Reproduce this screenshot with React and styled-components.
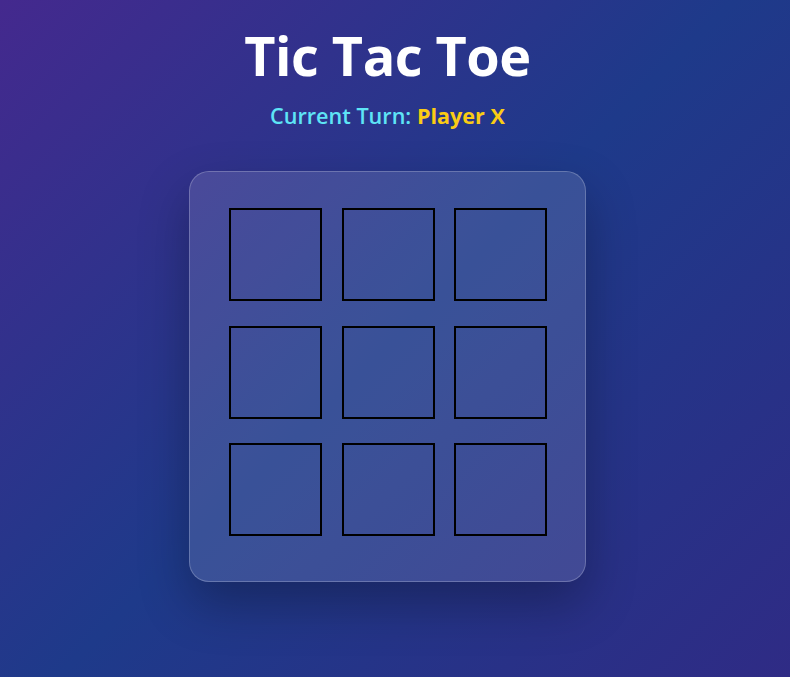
import React, { useState } from "react";
import styled, { createGlobalStyle } from "styled-components";

const Global = createGlobalStyle`
  html, body { margin: 0; padding: 0; }
  body {
    font-family: "Open Sans", "Noto Sans", sans-serif;
    background: linear-gradient(135deg, #44298e 0%, #1e3a8a 50%, #2f2b85 100%);
    min-height: 100vh;
  }
`;

const Page = styled.main`
  min-height: 100vh;
  display: flex;
  flex-direction: column;
  align-items: center;
  padding: 18px 15px 0 0;
  box-sizing: border-box;
`;

const Title = styled.h1`
  margin: 0;
  font-size: 54px;
  line-height: 74px;
  font-weight: 700;
  color: #ffffff;
  letter-spacing: -0.5px;
`;

const Status = styled.p`
  margin: 10px 0 0;
  font-size: 21.6px;
  line-height: 28px;
  color: #5ee4f6;
  font-weight: 600;
`;

const Player = styled.span`
  color: #facc15;
  font-weight: 700;
`;

const Board = styled.div`
  margin-top: 41px;
  display: grid;
  grid-template-columns: repeat(3, 93px);
  grid-template-rows: repeat(3, 93px);
  column-gap: 19.5px;
  row-gap: 24.5px;
  padding: 36px 38px 45px 39px;
  background: rgba(255, 255, 255, 0.12);
  border: 1px solid rgba(255, 255, 255, 0.22);
  border-radius: 20px;
  box-shadow: 0 22px 50px rgba(0, 0, 0, 0.28);
`;

const Cell = styled.button`
  box-sizing: border-box;
  width: 93px;
  height: 93px;
  padding: 0;
  background: transparent;
  border: 2px solid #000000;
  border-radius: 0;
  font-family: inherit;
  font-size: 48px;
  font-weight: 700;
  color: ${(p) => (p.$mark === "X" ? "#facc15" : "#5ee4f6")};
  cursor: pointer;
`;

export default function App() {
  const [cells, setCells] = useState(Array(9).fill(null));
  const [turn, setTurn] = useState("X");
  const play = (i) => {
    if (cells[i]) return;
    const next = cells.slice();
    next[i] = turn;
    setCells(next);
    setTurn(turn === "X" ? "O" : "X");
  };
  return (
    <>
      <Global />
      <Page>
        <Title>Tic Tac Toe</Title>
        <Status>
          Current Turn: <Player>Player {turn}</Player>
        </Status>
        <Board>
          {cells.map((c, i) => (
            <Cell key={i} $mark={c} onClick={() => play(i)}>
              {c}
            </Cell>
          ))}
        </Board>
      </Page>
    </>
  );
}
